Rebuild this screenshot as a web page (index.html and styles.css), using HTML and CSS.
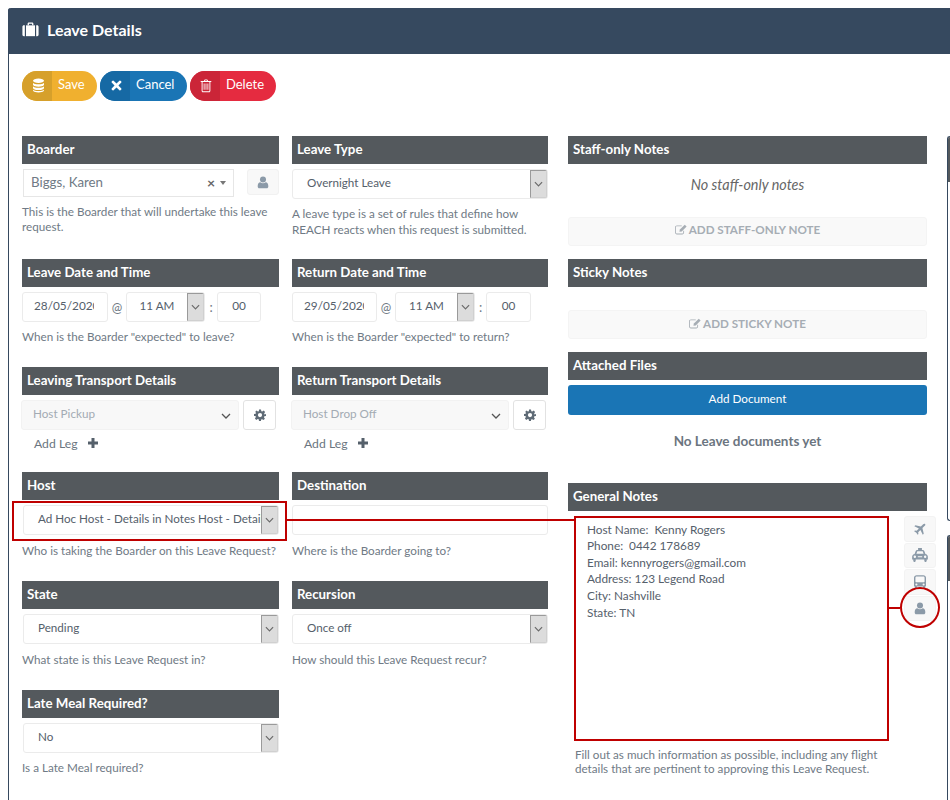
FILE: index.html
```html
<!DOCTYPE html>
<html lang="en">
<head>
<meta charset="utf-8">
<title>Leave Details</title>
<link rel="stylesheet" href="styles.css">
</head>
<body>
<svg class="sprite" xmlns="http://www.w3.org/2000/svg">
  <symbol id="i-case" viewBox="0 0 20 18"><path d="M6.5 4V2.2C6.5 1.3 7.2.6 8 .6h4c.8 0 1.5.7 1.5 1.6V4h-1.6V2.2H8.100V4z"/><path d="M4.600 4h10.800v13H4.600z"/><path d="M3.200 4v13H2C1 17 .3 16.200.3 15.300V5.700C.3 4.800 1 4 2 4zM16.800 4H18c1 0 1.700.8 1.700 1.700v9.600c0 .9-.7 1.700-1.700 1.700h-1.200z"/></symbol>
  <symbol id="i-db" viewBox="0 0 16 18"><ellipse cx="8" cy="3.200" rx="6.800" ry="2.700"/><path d="M1.200 5.500C2 7 5 7.500 8 7.500s6-.5 6.800-2v2.600C14 9.800 11 10.400 8 10.400S2 9.800 1.200 8.100z"/><path d="M1.200 9.800c.8 1.500 3.800 2 6.800 2s6-.5 6.800-2v2.500c-.8 1.700-3.800 2.200-6.800 2.200s-6-.5-6.800-2.200z"/><path d="M1.200 13.900c.8 1.500 3.800 2 6.800 2s6-.5 6.800-2v1.300c-.8 1.800-3.800 2.400-6.800 2.400s-6-.6-6.800-2.400z"/></symbol>
  <symbol id="i-x" viewBox="0 0 14 14"><path d="M3.300.9 7 4.500 10.700.9q.7-.6 1.300 0l1.100 1.100q.6.600 0 1.300L9.500 7l3.600 3.700q.6.700 0 1.300L12 13.100q-.6.600-1.300 0L7 9.500l-3.700 3.600q-.7.600-1.300 0L.9 12q-.6-.6 0-1.300L4.500 7 .9 3.300q-.6-.7 0-1.300L2 .9q.6-.6 1.300 0z"/></symbol>
  <symbol id="i-trash" viewBox="0 0 14 16"><path fill-rule="evenodd" d="M4.500 2.200 5.300.8C5.500.4 5.800.3 6.100.3h1.800c.3 0 .6.100.8.5l.8 1.400h3.300c.3 0 .4.200.4.400v.8h-1.100v10c0 1-.6 1.800-1.400 1.800H3.300c-.8 0-1.400-.8-1.400-1.800v-10H.8v-.8c0-.2.100-.4.400-.4zM5.800 2.200h2.400L7.700 1.400H6.300zM3 3.400v10c0 .5.200.7.300.7h7.400c.1 0 .3-.2.300-.7v-10zM4.300 5h1v7.500h-1zM6.500 5h1v7.500h-1zM8.700 5h1v7.500h-1z"/></symbol>
  <symbol id="i-user" viewBox="0 0 14 16"><circle cx="7" cy="4.200" r="3.700"/><path d="M3.700 7.600C4.500 8.400 5.700 8.900 7 8.900s2.500-.5 3.300-1.300c1.900.2 3.200 1.800 3.200 4.400v1.300c0 1.100-.8 1.900-1.900 1.900H2.400c-1.100 0-1.900-.8-1.900-1.900V12c0-2.600 1.300-4.200 3.200-4.400z"/></symbol>
  <symbol id="i-gear" viewBox="0 0 24 24"><path fill-rule="evenodd" d="M10 1h4l.6 3.300 2 .8L19.400 3.200l2.800 2.800-1.900 2.800.8 2L24 10v4l-3.300.6-.8 2 1.900 2.800-2.800 2.800-2.800-1.900-2 .8L14 24h-4l-.6-3.300-2-.8-2.800 1.900-2.800-2.800 1.900-2.800-.8-2L0 14v-4l3.300-.6.800-2L2.200 6 5 3.200l2.800 1.900 2-.8zM12 8a4.200 4.200 0 1 0 0 8.400A4.200 4.200 0 0 0 12 8z"/></symbol>
  <symbol id="i-plus" viewBox="0 0 10 10"><path d="M3.500 0h3v3.500H10v3H6.500V10h-3V6.500H0v-3h3.500z"/></symbol>
  <symbol id="i-edit" viewBox="0 0 16 14"><path d="M2.500 1.500H9v1.100H2.500c-.7 0-1.300.6-1.300 1.300v7.200c0 .7.600 1.300 1.300 1.300h7.200c.7 0 1.300-.6 1.300-1.300V8.500h1.100v2.600c0 1.300-1.100 2.400-2.400 2.400H2.500C1.200 13.500.1 12.400.1 11.100V3.900C.1 2.600 1.200 1.500 2.500 1.500z"/><path d="M13 .5 15.500 3 9 9.500 5.900 10.100 6.500 7z"/></symbol>
  <symbol id="i-plane" viewBox="0 0 24 24"><path transform="rotate(45 12 12)" d="M12 0c1.200 0 2 1.200 2 3v6l9 5.500V17l-9-2.800V20l2.600 2v2L12 22.800 7.400 24v-2l2.600-2v-5.800L1 17v-2.500L10 9V3c0-1.800.8-3 2-3z"/></symbol>
  <symbol id="i-cab" viewBox="0 0 18 16"><path fill-rule="evenodd" d="M6.800 0h4.400v2.200h1C13 2.200 13.600 2.700 13.900 3.500l1.300 3.300C16.700 7 18 8.300 18 9.900V13h-1.300v1.500c0 .8-.6 1.400-1.400 1.400s-1.400-.6-1.400-1.400V13H4.100v1.500c0 .8-.6 1.400-1.400 1.400s-1.400-.6-1.400-1.400V13H0V9.900C0 8.300 1.300 7 2.800 6.800l1.300-3.300C4.400 2.700 5 2.200 5.800 2.200h1zM5.900 3.800 4.900 6.700h8.200l-1-2.900zM3.100 8.700a1.400 1.400 0 1 0 0 2.800 1.400 1.400 0 0 0 0-2.800zM14.900 8.700a1.400 1.400 0 1 0 0 2.800 1.400 1.400 0 0 0 0-2.800zM6.500 9.300v1.400h5V9.300z"/></symbol>
  <symbol id="i-bus" viewBox="0 0 16 18"><path fill-rule="evenodd" d="M3.500 0h9C14.400 0 16 1.400 16 3.300V14c0 .6-.4 1-1 1v1.500c0 .8-.6 1.400-1.400 1.400s-1.400-.6-1.400-1.400V15H3.800v1.500c0 .8-.6 1.400-1.400 1.400S1 17.300 1 16.500V15c-.6 0-1-.4-1-1V3.300C0 1.400 1.600 0 3.500 0zM3.500 1.700C2.600 1.700 1.900 2.400 1.900 3.300V8.400c0 .5.400.9.900.9h10.400c.5 0 .9-.4.900-.9V3.300c0-.9-.7-1.600-1.600-1.600zM3.200 11a1.400 1.400 0 1 0 0 2.800 1.400 1.400 0 0 0 0-2.800zM12.800 11a1.400 1.400 0 1 0 0 2.800 1.400 1.400 0 0 0 0-2.800z"/></symbol>
  <symbol id="i-chev" viewBox="0 0 10 6"><path d="M1 1l4 4 4-4" fill="none" stroke="currentColor" stroke-width="1.300"/></symbol>
</svg>

<div class="panel">
  <header class="panel-head">
    <svg class="ico-case"><use href="#i-case"/></svg>
    <h1>Leave Details</h1>
  </header>
  <div class="panel-body">
    <div class="toolbar">
      <a class="pill pill-save"><span class="pill-ico"><svg class="ico-db"><use href="#i-db"/></svg></span><span class="pill-txt">Save</span></a>
      <a class="pill pill-cancel"><span class="pill-ico"><svg class="ico-x"><use href="#i-x"/></svg></span><span class="pill-txt">Cancel</span></a>
      <a class="pill pill-delete"><span class="pill-ico"><svg class="ico-trash"><use href="#i-trash"/></svg></span><span class="pill-txt">Delete</span></a>
    </div>

    <div class="main">
      <div class="form-grid">
        <section class="field">
          <h2 class="head">Boarder</h2>
          <div class="boarder-row">
            <div class="combo"><span class="combo-txt">Biggs, Karen</span><span class="combo-x">×</span><span class="combo-caret"></span></div>
            <span class="user-btn"><svg class="ico-user"><use href="#i-user"/></svg></span>
          </div>
          <p class="desc desc-tight">This is the Boarder that will undertake this leave request.</p>
        </section>
        <section class="field">
          <h2 class="head">Leave Type</h2>
          <div class="sel"><span class="sel-txt">Overnight Leave</span><span class="sel-arrow"><svg class="ico-chev"><use href="#i-chev"/></svg></span></div>
          <p class="desc desc-wide">A leave type is a set of rules that define how REACH reacts when this request is submitted.</p>
        </section>

        <section class="field">
          <h2 class="head">Leave Date and Time</h2>
          <div class="datetime datetime-left">
            <div class="box box-date"><span class="box-clip">28/05/2020</span></div>
            <span class="at">@</span>
            <div class="sel sel-time"><span class="sel-txt">11 AM</span><span class="sel-arrow"><svg class="ico-chev"><use href="#i-chev"/></svg></span></div>
            <span class="colon">:</span>
            <div class="box box-min">00</div>
          </div>
          <p class="desc desc-tight">When is the Boarder "expected" to leave?</p>
        </section>
        <section class="field">
          <h2 class="head">Return Date and Time</h2>
          <div class="datetime">
            <div class="box box-date"><span class="box-clip">29/05/2020</span></div>
            <span class="at">@</span>
            <div class="sel sel-time"><span class="sel-txt">11 AM</span><span class="sel-arrow"><svg class="ico-chev"><use href="#i-chev"/></svg></span></div>
            <span class="colon">:</span>
            <div class="box box-min">00</div>
          </div>
          <p class="desc desc-tight">When is the Boarder "expected" to return?</p>
        </section>

        <section class="field">
          <h2 class="head">Leaving Transport Details</h2>
          <div class="transport">
            <div class="tsel"><span>Host Pickup</span><svg class="ico-tchev"><use href="#i-chev"/></svg></div>
            <span class="gear-btn"><svg class="ico-gear"><use href="#i-gear"/></svg></span>
          </div>
          <div class="add-leg"><span>Add Leg</span><svg class="ico-plus"><use href="#i-plus"/></svg></div>
        </section>
        <section class="field">
          <h2 class="head">Return Transport Details</h2>
          <div class="transport">
            <div class="tsel"><span>Host Drop Off</span><svg class="ico-tchev"><use href="#i-chev"/></svg></div>
            <span class="gear-btn"><svg class="ico-gear"><use href="#i-gear"/></svg></span>
          </div>
          <div class="add-leg"><span>Add Leg</span><svg class="ico-plus"><use href="#i-plus"/></svg></div>
        </section>

        <section class="field">
          <h2 class="head">Host</h2>
          <div class="sel sel-left"><span class="sel-txt">Ad Hoc Host - Details in Notes Host - Details in Notes</span><span class="sel-arrow"><svg class="ico-chev"><use href="#i-chev"/></svg></span></div>
          <p class="desc">Who is taking the Boarder on this Leave Request?</p>
        </section>
        <section class="field">
          <h2 class="head">Destination</h2>
          <div class="box box-full"></div>
          <p class="desc">Where is the Boarder going to?</p>
        </section>

        <section class="field">
          <h2 class="head">State</h2>
          <div class="sel sel-left"><span class="sel-txt">Pending</span><span class="sel-arrow"><svg class="ico-chev"><use href="#i-chev"/></svg></span></div>
          <p class="desc">What state is this Leave Request in?</p>
        </section>
        <section class="field">
          <h2 class="head">Recursion</h2>
          <div class="sel"><span class="sel-txt">Once off</span><span class="sel-arrow"><svg class="ico-chev"><use href="#i-chev"/></svg></span></div>
          <p class="desc">How should this Leave Request recur?</p>
        </section>

        <section class="field">
          <h2 class="head">Late Meal Required?</h2>
          <div class="sel sel-left"><span class="sel-txt">No</span><span class="sel-arrow"><svg class="ico-chev"><use href="#i-chev"/></svg></span></div>
          <p class="desc desc-tight">Is a Late Meal required?</p>
        </section>
      </div>

      <div class="aside">
        <section class="block block-staff">
          <h2 class="head">Staff-only Notes</h2>
          <p class="empty-note">No staff-only notes</p>
          <div class="add-note"><svg class="ico-edit"><use href="#i-edit"/></svg>ADD STAFF-ONLY NOTE</div>
        </section>
        <section class="block block-sticky">
          <h2 class="head">Sticky Notes</h2>
          <div class="add-note"><svg class="ico-edit"><use href="#i-edit"/></svg>ADD STICKY NOTE</div>
        </section>
        <section class="block block-files">
          <h2 class="head">Attached Files</h2>
          <div class="add-doc">Add Document</div>
          <p class="empty-docs">No Leave documents yet</p>
        </section>
        <section class="block">
          <h2 class="head">General Notes</h2>
          <div class="notes-row">
            <div class="notes">Host Name:  Kenny Rogers
Phone:  0442 178689
Email: kennyrogers@gmail.com
Address: 123 Legend Road
City: Nashville
State: TN</div>
            <div class="note-btns">
              <span class="note-btn"><svg class="ico-plane"><use href="#i-plane"/></svg></span>
              <span class="note-btn"><svg class="ico-cab"><use href="#i-cab"/></svg></span>
              <span class="note-btn"><svg class="ico-bus"><use href="#i-bus"/></svg></span>
              <span class="note-btn"><svg class="ico-user"><use href="#i-user"/></svg></span>
            </div>
          </div>
          <p class="desc desc-notes">Fill out as much information as possible, including any flight details that are pertinent to approving this Leave Request.</p>
        </section>
      </div>

      <div class="side">
        <div class="side-card side-card-a"><div class="side-card-head"></div></div>
        <div class="side-card side-card-b"><div class="side-card-head"></div></div>
      </div>
    </div>
  </div>
</div>

<div class="mark mark-host"></div>
<div class="mark mark-link"></div>
<div class="mark mark-notes"></div>
<div class="mark mark-tick"></div>
<div class="mark mark-circle"></div>
</body>
</html>
```

FILE: styles.css
```css
* { box-sizing: border-box; }
html, body { margin: 0; height: 800px; overflow: hidden; }
body { padding: 8px 0 0 8px; background: #fff; font-family: Lato, "Open Sans", sans-serif; color: #5f6b76; position: relative; }
h1, h2, p { margin: 0; }
svg { fill: currentColor; display: block; }
.sprite { display: none; }

.panel { border-left: 1px solid #36495f; height: 792px; border-top-left-radius: 3px; }
.panel-head { height: 46px; margin-left: -1px; background: #36495f; color: #fff; display: flex; align-items: center; padding: 0 0 3px 14px; gap: 8px; border-top-left-radius: 3px; }
.panel-head h1 { font-size: 16px; font-weight: 700; }
.ico-case { width: 17px; height: 15px; }

.panel-body { padding: 17px 0 0 13px; }

.toolbar { display: flex; gap: 3px; height: 30px; margin-bottom: 35px; }
.pill { display: flex; height: 30px; border-radius: 15px; overflow: hidden; color: #fff; font-size: 13px; }
.pill-ico { width: 30px; display: flex; align-items: center; justify-content: center; padding: 0 0 1px 3px; }
.pill-txt { display: flex; align-items: center; padding: 0 12px 4px 6px; }
.pill-save { width: 75px; background: #f0b02f; }
.pill-save .pill-ico { background: #d6a02b; }
.pill-cancel { width: 87px; background: #1a75b5; }
.pill-cancel .pill-ico { background: #1669a4; }
.pill-delete { width: 86px; background: #e52b40; }
.pill-delete .pill-ico { background: #cb2538; }
.ico-db { width: 13px; height: 15px; }
.ico-x { width: 11px; height: 11px; }
.ico-trash { width: 12px; height: 14px; }

.main { display: flex; align-items: flex-start; }
.form-grid { flex: 0 0 526px; display: grid; grid-template-columns: 257px 256px; column-gap: 13px; grid-template-rows: 123px 108px 105px 109px 109px auto; margin-right: 20px; }

.head { height: 28px; background: #54595d; color: #fff; font-size: 13.300px; font-weight: 700; line-height: 26px; padding-left: 5px; }

.desc { font-size: 11.700px; line-height: 15px; color: #6f7a85; margin-top: 8px; }
.desc-tight { margin-top: 7px; }
.desc-wide { line-height: 16px; margin-top: 6px; }

.sel { display: flex; height: 30px; margin-top: 5px; border: 1px solid #ebebeb; border-radius: 3px; background: #fff; font-size: 11.650px; color: #55606b; overflow: hidden; }
.sel-left { margin-left: 1px; }
.sel-txt { flex: 1; min-width: 0; padding: 0 0 0 14px; line-height: 26px; white-space: nowrap; overflow: hidden; }
.sel-arrow { flex: 0 0 17px; background: #dcdcdc; border: 1px solid #9a9a9a; border-right-color: #d0d0d0; border-bottom-color: #d0d0d0; display: flex; align-items: center; justify-content: center; color: #6a6a6a; }
.ico-chev { width: 9px; height: 6px; }

.boarder-row { display: flex; margin-top: 5px; padding-left: 1px; }
.combo { width: 211px; height: 28px; border: 1px solid #e6e6e6; display: flex; align-items: center; font-size: 13.300px; color: #6f7a85; padding: 0 0 3px 7px; }
.combo-txt { flex: 1; }
.combo-x { font-size: 14px; font-weight: 700; color: #666; margin: 2px 5px 0 0; }
.combo-caret { width: 0; height: 0; border-left: 3.500px solid transparent; border-right: 3.500px solid transparent; border-top: 4px solid #777; margin: 3px 7px 0 0; }
.user-btn { width: 32px; height: 26px; margin-left: 13px; background: #f8f8f8; border: 1px solid #f1f1f1; border-radius: 3px; display: flex; align-items: center; justify-content: center; color: #8b9aa8; }
.ico-user { width: 12px; height: 13px; }

.datetime { display: flex; align-items: center; margin-top: 5px; height: 30px; }
.box { height: 30px; border: 1px solid #ebebeb; border-radius: 3px; background: #fff; font-size: 11.800px; color: #55606b; }
.box-date { width: 85px; padding: 0 12px 0 11px; line-height: 26px; }
.datetime-left .box-date { width: 86px; padding-right: 13px; }
.datetime-left .sel-time { width: 79px; }
.datetime-left .box-min { width: 44px; }
.datetime-left .colon { width: 12px; }
.box-clip { display: block; overflow: hidden; white-space: nowrap; }
.at { width: 18px; text-align: center; font-size: 12.500px; color: #6f7a85; }
.sel-time { width: 80px; margin-top: 0; }
.sel-time .sel-txt { text-align: center; padding: 0; }
.colon { width: 11px; text-align: center; font-size: 13px; color: #6f7a85; }
.box-min { width: 45px; text-align: center; line-height: 26px; }
.box-full { margin-top: 5px; }

.transport { display: flex; margin: 5px 0 0 -1px; gap: 4px; }
.tsel { width: 218px; height: 30px; background: #f8f8f8; border: 1px solid #f2f2f2; border-radius: 3px; display: flex; align-items: center; justify-content: space-between; padding: 0 7px 4px 11px; font-size: 11.700px; color: #a3abb3; }
.ico-tchev { width: 10px; height: 6px; color: #555; margin-top: 5px; }
.gear-btn { width: 33px; height: 30px; border: 1px solid #e2e2e2; border-radius: 3px; background: #fff; display: flex; align-items: center; justify-content: center; color: #5f6b76; }
.ico-gear { width: 12px; height: 12px; }
.add-leg { display: flex; align-items: center; gap: 11px; margin: 5px 0 0 12px; font-size: 12.200px; color: #6a7580; height: 16px; }
.ico-plus { width: 10px; height: 10px; color: #55606b; }

.aside { flex: 0 0 359px; min-width: 0; margin-right: 20px; }
.block-staff { height: 123px; }
.block-sticky { height: 93px; }
.block-files { height: 131px; }
.empty-note { text-align: center; font-size: 14.400px; font-style: italic; color: #666; line-height: 17px; margin-top: 12px; }
.add-note { height: 29px; background: #f9f9f9; border: 1px solid #f4f4f4; border-radius: 3px; margin-top: 23px; padding-bottom: 3px; display: flex; align-items: center; justify-content: center; gap: 2px; font-size: 11.650px; font-weight: 700; color: #a6adb4; }
.block-staff .add-note { margin-top: 24px; padding-bottom: 5px; }
.ico-edit { width: 12px; height: 11px; }
.add-doc { height: 30px; margin-top: 5px; background: #1a75b5; color: #fff; border-radius: 3px; font-size: 11.700px; text-align: center; line-height: 27px; }
.empty-docs { font-size: 13.500px; font-weight: 700; color: #6b7580; text-align: center; margin-top: 18px; }

.notes-row { display: flex; align-items: flex-start; margin-top: 5px; }
.notes { flex: 0 0 314px; height: 224px; margin-left: 7px; padding: 5.700px 0 0 12px; white-space: pre-wrap; font-size: 11.800px; line-height: 16.600px; color: #55606b; }
.note-btns { margin-left: 15px; display: flex; flex-direction: column; gap: 1px; flex: 0 0 32px; }
.note-btn { width: 32px; height: 25.500px; background: #f8f8f8; border: 1px solid #f3f3f3; border-radius: 3px; display: flex; align-items: center; justify-content: center; color: #8b9aa8; }
.ico-plane { width: 13px; height: 13px; }
.ico-cab { width: 16px; height: 14px; }
.ico-bus { width: 12px; height: 14px; }
.desc-notes { margin: 8px 0 0 7px; line-height: 14px; width: 320px; font-size: 11.650px; }

.side { flex: 0 0 3px; }
.side-card { border: 1px solid #36495f; border-right: 0; border-radius: 4px 0 0 4px; overflow: hidden; }
.side-card-a { height: 385px; }
.side-card-b { height: 265px; margin-top: 14px; border-bottom: 0; border-radius: 4px 0 0 0; }
.side-card-head { height: 45px; background: #54595d; }

.mark { position: absolute; border: 0 solid #bf0000; }
.mark-host { left: 12px; top: 501px; width: 275px; height: 40px; border-width: 2px; }
.mark-link { left: 287px; top: 519px; width: 288px; height: 2px; background: #bf0000; }
.mark-notes { left: 574px; top: 516px; width: 315px; height: 225px; border-width: 2px; }
.mark-tick { left: 889px; top: 607px; width: 11px; height: 2px; background: #bf0000; }
.mark-circle { left: 900px; top: 587px; width: 40px; height: 41px; border-width: 2px; border-radius: 50%; }
```
